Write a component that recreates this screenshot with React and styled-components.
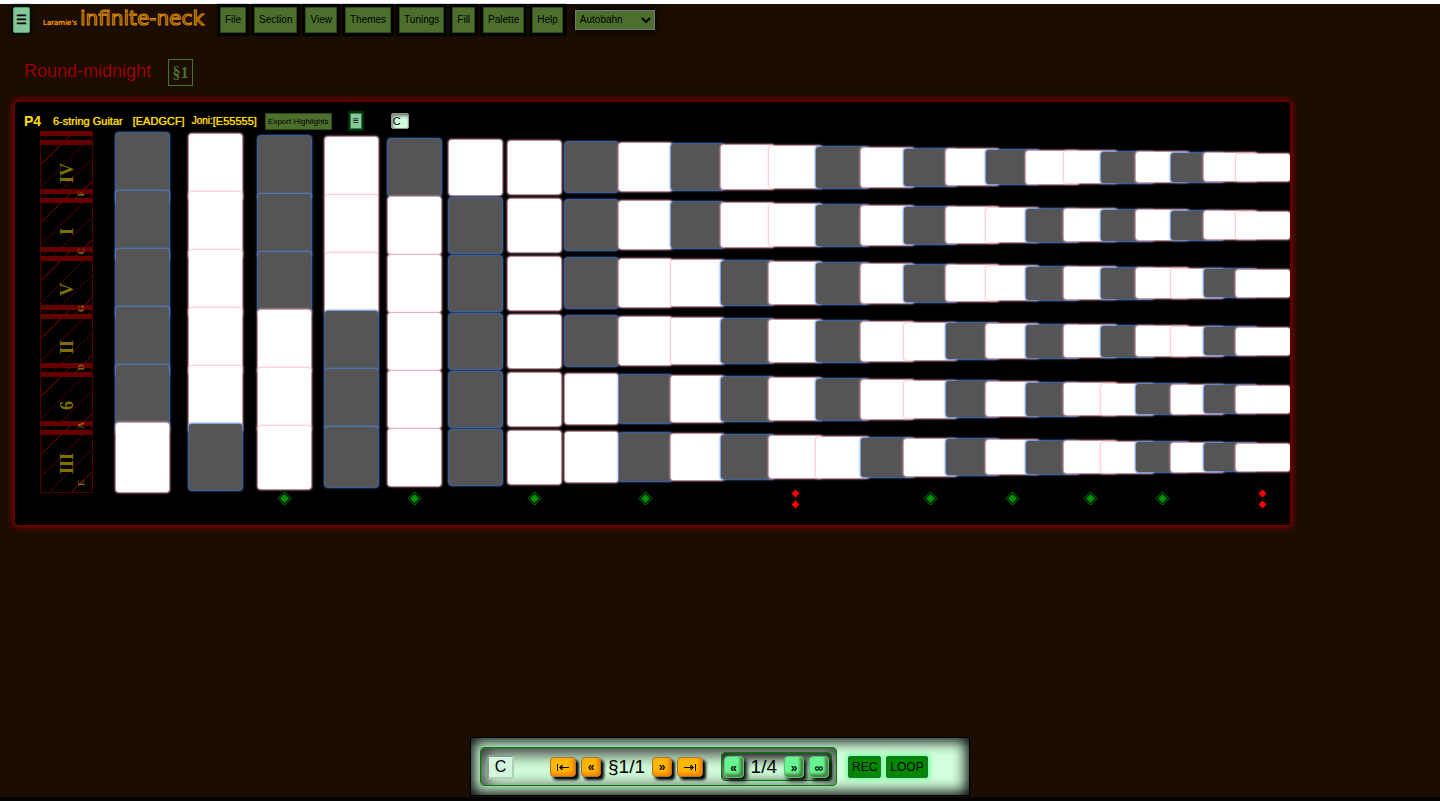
import React from "react";
import styled, { createGlobalStyle, css } from "styled-components";

const GlobalStyle = createGlobalStyle`
  * { box-sizing: border-box; }
  body {
    margin: 0;
    background: #000;
    font-family: "Liberation Sans", Arial, sans-serif;
    color: #000;
  }
  button, input, select { font-family: inherit; margin: 0; }
`;

const Page = styled.div`
  min-height: 100vh;
  display: flex;
  flex-direction: column;
  border-top: 4px solid #fff;
  border-bottom: 4px solid #040404;
  background: #1b0d02;
`;

const Toolbar = styled.header`
  display: flex;
  align-items: center;
  height: 31px;
  padding: 0 13px;
`;

const greenEdge = css`
  border: 1px solid #2f4a1a;
  background: #4c6f2b;
  color: #000;
`;

const MenuToggle = styled.button`
  width: 17px;
  height: 26px;
  padding: 0;
  border: 1px solid #5a9a72;
  border-radius: 2px;
  background: #84c798;
  font-size: 12px;
  font-weight: bold;
  line-height: 24px;
  box-shadow: 0 0 3px 2px #001008;
`;

const Brand = styled.h1`
  margin: 0 16px 0 13px;
  padding-top: 2px;
  font-family: "DejaVu Sans", Verdana, sans-serif;
  font-weight: normal;
  font-size: 20px;
  line-height: 28px;
  white-space: nowrap;
  color: #332b10;
  -webkit-text-stroke: 1px #e08a00;
`;

const Owner = styled.small`
  margin-right: 3px;
  font-size: 7px;
  color: #ff9c00;
  -webkit-text-stroke: 0;
  text-shadow: 0 0 1px #ff9c00;
`;

const Menus = styled.nav`
  display: flex;
  gap: 8px;
`;

const MenuButton = styled.button`
  ${greenEdge}
  height: 26px;
  padding: 0 4px;
  font-size: 10px;
  box-shadow: 0 0 1px 3px #050300;
`;

const ThemeSelect = styled.select`
  width: 80px;
  height: 20px;
  margin-left: 12px;
  padding: 0;
  border: 1px solid #777;
  background: #4c6f2b;
  color: #000;
  font-size: 10px;
  box-shadow: 0 0 6px 1px #000;
`;

const SongHeader = styled.div`
  display: flex;
  align-items: center;
  gap: 17px;
  height: 67px;
  padding: 8px 24px 0;
`;

const SongTitle = styled.h2`
  margin: 0;
  font-weight: normal;
  font-size: 18px;
  line-height: 28px;
  padding-bottom: 4px;
  color: #990000;
`;

const SectionBadge = styled.span`
  width: 25px;
  height: 27px;
  border: 1px solid #4c6f2b;
  color: #4c6f2b;
  font-family: "Liberation Serif", serif;
  font-size: 16px;
  font-weight: bold;
  line-height: 25px;
  text-align: center;
`;

const Board = styled.main`
  width: fit-content;
  margin-left: 15px;
  padding-bottom: 14px;
  border-radius: 4px;
  background: #000;
  box-shadow: 0 0 6px 3px #800000;
`;

const BoardHeader = styled.div`
  display: flex;
  align-items: center;
  height: 36px;
  padding: 2px 9px 0;
  font-size: 11px;
  line-height: 14px;
  color: #ffdd00;
  white-space: nowrap;
`;

const BoardName = styled.strong`
  width: 29px;
  font-size: 14px;
`;

const BoardText = styled.span`
  margin-right: ${(p) => p.$gap}px;
  font-size: ${(p) => (p.$small ? 10 : 11)}px;
  text-shadow: 0 0 1px #ffdd00;
`;

const ExportButton = styled.button`
  ${greenEdge}
  width: 67px;
  height: 17px;
  padding: 0;
  font-size: 8px;
  line-height: 15px;
  white-space: nowrap;
`;

const BoardMenu = styled.button`
  width: 12px;
  height: 16px;
  margin: 0 29px 0 18px;
  padding: 0;
  border: 1px solid #3d7a4f;
  background: #84c798;
  font-size: 10px;
  font-weight: bold;
  line-height: 12px;
  box-shadow: 0 0 1px 2px #033003;
`;

const KeyInput = styled.input`
  width: 18px;
  height: 16px;
  padding: 0 1px;
  border: 1px solid #889988;
  border-radius: 2px;
  background: #d2fbdc;
  font-size: 11px;
  color: #000;
  box-shadow: inset 1px 2px 3px #777;
`;

const columns = [73, 69, 67, 63, 61, 59, 57, 54, 52, 50, 48, 47, 45, 43, 42, 40, 40, 38, 37, 35, 35, 33, 32, 54];
const cellHeights = [70, 67, 64, 61, 58, 56, 54, 51, 49, 47, 45, 43, 42, 40, 38, 37, 35, 34, 33, 32, 31, 30, 29, 28];

const Neck = styled.div`
  display: grid;
  grid-template-columns: 76px ${columns.map((w) => `${w}px`).join(" ")};
  grid-auto-rows: 58px;
  align-items: center;
  margin-left: 25px;
  overflow-x: clip;
`;

const MarkerRow = styled(Neck)`
  grid-auto-rows: 25px;
`;

const Nut = styled.div`
  display: grid;
  width: 53px;
  height: 72px;
  border: 1px solid #500000;
  border-top: 14px double #660000;
  background: repeating-linear-gradient(135deg, transparent 0 8px, #500000 8px 9px, transparent 9px 16px) border-box;
  font-family: "Liberation Serif", serif;
`;

const NutLabel = styled.span`
  grid-area: 1 / 1;
  place-self: center;
  writing-mode: vertical-rl;
  transform: rotate(180deg);
  font-size: 18px;
  font-weight: bold;
  line-height: 20px;
  color: #807000;
`;

const NutNote = styled(NutLabel)`
  position: relative;
  z-index: 1;
  place-self: end;
  margin: 0 6px 6px 0;
  font-size: 9px;
  line-height: 10px;
  color: #907000;
`;

const Fret = styled.div`
  width: 53px;
  height: ${(p) => p.$height - 1}px;
  border-radius: 3px;
  background: ${(p) => (p.$dark ? "#555" : "#fff")};
  box-shadow: 0 0 2px 1px ${(p) => (p.$dark ? "#5580d0" : "#ffc0cb")};

  &:nth-child(25n) {
    width: 54px;
  }
`;

const Marker = styled.svg`
  justify-self: start;
  display: block;
  width: 53px;
  height: 25px;
`;

const strings = [
  { note: "F", roman: "IV", pitch: 5 },
  { note: "C", roman: "I", pitch: 0 },
  { note: "G", roman: "V", pitch: 7 },
  { note: "D", roman: "II", pitch: 2 },
  { note: "A", roman: "6", pitch: 9 },
  { note: "E", roman: "III", pitch: 4 },
];
const accidentals = [1, 3, 6, 8, 10];
const single = [2, 4, 6, 8, 14, 16, 18, 20];
const octave = [11, 23];

function FretMarker({ index }) {
  if (single.includes(index)) {
    return (
      <Marker viewBox="0 0 53 25">
        <path d="M26.5 6 33 12.5 26.5 19 20 12.5Z" fill="none" stroke="#008a00" />
        <path d="M26.5 8 31 12.5 26.5 17 22 12.5Z" fill="#009000" />
      </Marker>
    );
  }
  if (octave.includes(index)) {
    return (
      <Marker viewBox="0 0 53 25">
        <path d="M26.5 3.5 30.5 7.5 26.5 11.5 22.5 7.5ZM26.5 14.5 30.5 18.5 26.5 22.5 22.5 18.5Z" fill="#f00" />
      </Marker>
    );
  }
  return <span />;
}

const Transport = styled.footer`
  display: flex;
  align-items: center;
  gap: 11px;
  align-self: center;
  width: 500px;
  height: 59px;
  margin: auto 0 1px;
  padding: 0 9px;
  border: 1px solid #000;
  background: #d2ffdc;
  box-shadow: inset 0 0 14px 3px #000;
`;

const SectionGroup = styled.div`
  display: flex;
  align-items: center;
  width: 357px;
  height: 39px;
  padding: 0 4px 0 6px;
  border: 1px solid #008000;
  border-radius: 4px;
  background: #d2ffdc;
  box-shadow: inset 2px 4px 16px 2px #333;
`;

const BeatGroup = styled.div`
  display: flex;
  align-items: center;
  height: 29px;
  margin-left: auto;
  padding: 0 2px;
  border: 1px solid #008000;
  border-radius: 4px;
  box-shadow: inset 2px 4px 12px #222;
`;

const TransportKey = styled.input`
  width: 27px;
  height: 24px;
  margin-right: 36px;
  padding: 0;
  border: 2px solid #8a9a8e;
  border-radius: 3px;
  border-right-color: #b4ccba;
  border-bottom-color: #b4ccba;
  background: #d2f5dc;
  font-size: 16px;
  text-align: center;
`;

const StepButton = styled.button`
  display: grid;
  place-items: center;
  width: ${(p) => (p.$wide ? 26 : 20)}px;
  height: 20px;
  padding: 0;
  border: 1px solid #a07830;
  border-radius: 4px;
  background: #ffb800;
  font-size: 12px;
  font-weight: bold;
  line-height: 16px;
  box-shadow: inset -2px -2px 4px #ff7000, 3px 3px 3px #000;
`;

const BeatButton = styled(StepButton)`
  height: 22px;
  padding-top: 2px;
  border: 1px solid #58c078;
  background: #66f590;
  box-shadow: inset -3px -3px 3px #4a8040, 3px 3px 4px #000;
`;

const Count = styled.output`
  padding: 0 7px;
  font-size: 19px;
  line-height: 24px;
`;

const Toggles = styled.div`
  display: flex;
  gap: 5px;
`;

const ToggleButton = styled.button`
  height: 22px;
  padding: 0 3px;
  border: 1px solid #2a6a3a;
  border-radius: 2px;
  background: #008800;
  font-size: 12px;
  box-shadow: 0 0 4px 2px #7dffa0;
`;

const Gap = styled.span`
  width: 5px;
`;

function SkipIcon({ flip }) {
  return (
    <svg width="14" height="10" viewBox="0 0 14 10" fill="none" stroke="#000">
      {flip ? (
        <path d="M1 5.5H10M8 3 10.5 5.5 8 8ZM12.5 2V9" />
      ) : (
        <path d="M13 5.5H4M6 3 3.5 5.5 6 8ZM1.5 2V9" />
      )}
    </svg>
  );
}

const menus = ["File", "Section", "View", "Themes", "Tunings", "Fill", "Palette", "Help"];

export default function App() {
  return (
    <Page>
      <GlobalStyle />
      <Toolbar>
        <MenuToggle aria-label="Menu">☰</MenuToggle>
        <Brand>
          <Owner>Laramie's</Owner>infinite-neck
        </Brand>
        <Menus>
          {menus.map((name) => (
            <MenuButton key={name}>{name}</MenuButton>
          ))}
        </Menus>
        <ThemeSelect aria-label="Theme" defaultValue="Autobahn">
          <option>Autobahn</option>
        </ThemeSelect>
      </Toolbar>

      <SongHeader>
        <SongTitle>Round-midnight</SongTitle>
        <SectionBadge>§1</SectionBadge>
      </SongHeader>

      <Board>
        <BoardHeader>
          <BoardName>P4</BoardName>
          <BoardText $gap={10}>6-string Guitar</BoardText>
          <BoardText $gap={7}>[EADGCF]</BoardText>
          <BoardText $gap={0} $small>Joni:</BoardText>
          <BoardText $gap={8}>[E55555]</BoardText>
          <ExportButton>Export Highlights</ExportButton>
          <BoardMenu aria-label="Board menu">≡</BoardMenu>
          <KeyInput aria-label="Board key" defaultValue="C" />
        </BoardHeader>
        <Neck>
          {strings.map((s) => (
            <React.Fragment key={s.note}>
              <Nut>
                <NutLabel>{s.roman}</NutLabel>
                <NutNote>{s.note}</NutNote>
              </Nut>
              {cellHeights.map((h, i) => (
                <Fret key={i} $height={h} $dark={accidentals.includes((s.pitch + i + 1) % 12)} />
              ))}
            </React.Fragment>
          ))}
        </Neck>
        <MarkerRow>
          <span />
          {columns.map((_, i) => (
            <FretMarker key={i} index={i} />
          ))}
        </MarkerRow>
      </Board>

      <Transport>
        <SectionGroup>
          <TransportKey aria-label="Key" defaultValue="C" />
          <StepButton $wide aria-label="First section"><SkipIcon /></StepButton>
          <Gap />
          <StepButton aria-label="Previous section">«</StepButton>
          <Count>§1/1</Count>
          <StepButton aria-label="Next section">»</StepButton>
          <Gap />
          <StepButton $wide aria-label="Last section"><SkipIcon flip /></StepButton>
          <BeatGroup>
            <BeatButton aria-label="Previous beat">«</BeatButton>
            <Count>1/4</Count>
            <BeatButton aria-label="Next beat">»</BeatButton>
            <Gap />
            <BeatButton aria-label="Loop forever">∞</BeatButton>
          </BeatGroup>
        </SectionGroup>
        <Toggles>
          <ToggleButton>REC</ToggleButton>
          <ToggleButton>LOOP</ToggleButton>
        </Toggles>
      </Transport>
    </Page>
  );
}
